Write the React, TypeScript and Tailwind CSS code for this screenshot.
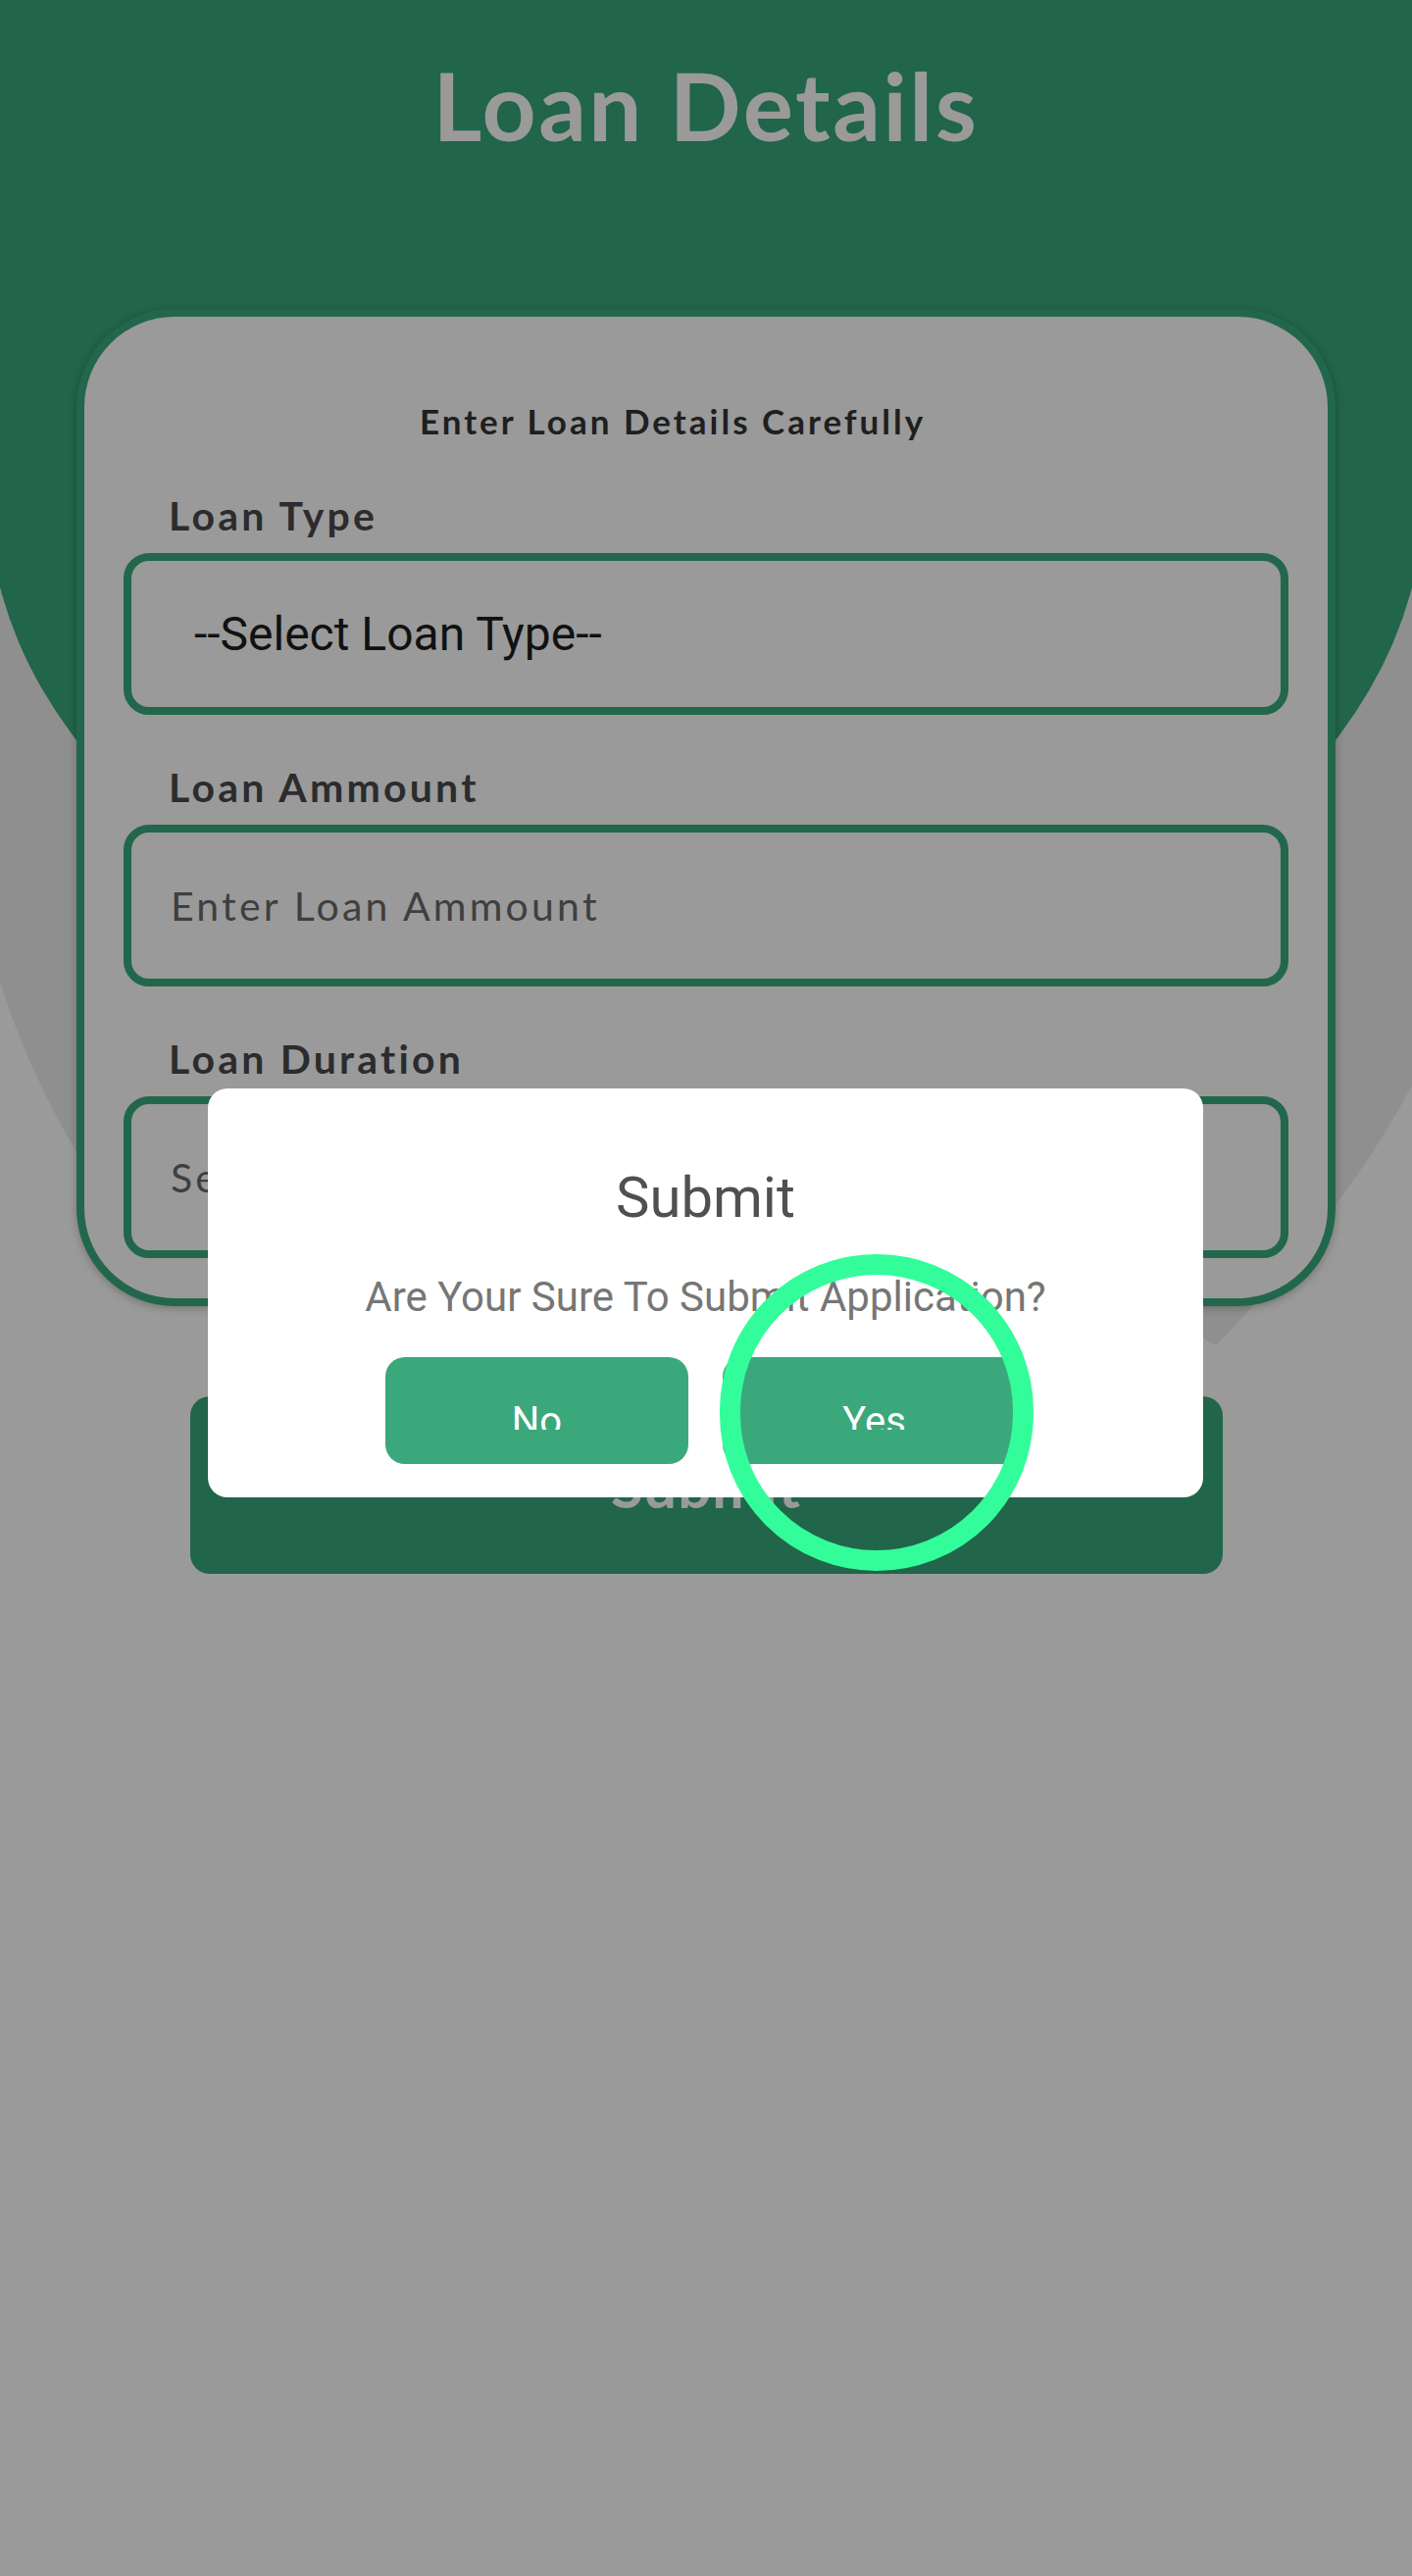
import React from 'react';

const fields = [
  { label: 'Loan Type', kind: 'select', text: '--Select Loan Type--' },
  { label: 'Loan Ammount', kind: 'input', text: 'Enter Loan Ammount' },
  { label: 'Loan Duration', kind: 'input', text: 'Select Loan Duration' },
];

function Field({ label, kind, text, first }: { label: string; kind: string; text: string; first: boolean }) {
  return (
    <div className={first ? 'mt-[52px]' : 'mt-[50px]'}>
      <div className="pl-[46px] text-[41px] leading-[48px] font-bold tracking-[3.2px] text-[#2c2c2e]">{label}</div>
      <div className="mt-[14px] h-[165px] rounded-[26px] border-[8px] border-[#22674b] flex items-center">
        {kind === 'select' ? (
          <span className="pl-[64px] font-['Roboto',sans-serif] text-[48px] leading-[56px] text-[#111111]">{text}</span>
        ) : (
          <span className="pl-[40px] text-[41px] leading-[50px] tracking-[3.2px] text-[#3f3f3f]">{text}</span>
        )}
      </div>
    </div>
  );
}

function ConfirmDialog() {
  return (
    <div className="absolute left-[212px] top-[1110px] w-[1015px] h-[417px] bg-white rounded-[20px] flex flex-col items-center pt-[77px] font-['Roboto',sans-serif]">
      <div className="text-[58px] leading-[68px] text-[#505050]">Submit</div>
      <div className="mt-[44px] text-[42px] leading-[48px] text-[#767676]">Are Your Sure To Submit Application?</div>
      <div className="mt-[37px] flex gap-[35px]">
        {['No', 'Yes'].map((t) => (
          <button key={t} className="w-[309px] h-[109px] rounded-[20px] bg-[#3aa87b] flex justify-center pt-[46px]">
            <span className="block h-[28px] overflow-hidden text-[40px] leading-[40px] text-white">{t}</span>
          </button>
        ))}
      </div>
    </div>
  );
}

export default function App() {
  return (
    <div className="relative w-full h-[2627px] overflow-hidden bg-[#9a9a9a] font-['Lato',sans-serif]">
      {/* background shapes */}
      <svg className="absolute left-0 top-0" width="1440" height="1500" viewBox="0 0 1440 1500">
        <path
          d="M0 500 L0 1001 C20 1065 48 1125 80 1178 L700 1290 L1150 1320 L1240 1372 C1320 1290 1390 1200 1440 1107 L1440 500 Z"
          fill="#8f8f8f"
        />
      </svg>
      <div className="absolute top-0 left-[-12px] w-[1464px] h-[1025px] bg-[#21654a] rounded-bl-[732px_520px] rounded-br-[732px_520px]" />

      <div className="relative flex flex-col items-center">
        <h1 className="mt-[49px] text-[96px] leading-[115px] font-bold tracking-[2.5px] text-[#9a9a9a]">Loan Details</h1>

        <div className="mt-[151px] w-[1284px] rounded-[100px] border-[8px] border-[#22674b] bg-[#9a9a9a] px-[40px] pt-[85px] pb-[41px] shadow-[0_2px_8px_rgba(0,0,0,0.25)]">
          <div className="pr-[68px] text-center text-[35px] leading-[42px] font-bold tracking-[3px] text-[#1f1f1f]">
            Enter Loan Details Carefully
          </div>
          {fields.map((f, i) => (
            <Field key={f.label} label={f.label} kind={f.kind} text={f.text} first={i === 0} />
          ))}
        </div>

        <button className="mt-[92px] w-[1053px] h-[181px] rounded-[20px] bg-[#21654a] flex items-center justify-center text-[60px] font-bold tracking-[1px] text-[#9a9a9a]">
          Submit
        </button>
      </div>

      <ConfirmDialog />

      {/* touch indicator */}
      <div className="absolute left-[734px] top-[1279px] w-[320px] h-[323px] rounded-full border-[21px] border-[#33fd9a]" />
    </div>
  );
}
